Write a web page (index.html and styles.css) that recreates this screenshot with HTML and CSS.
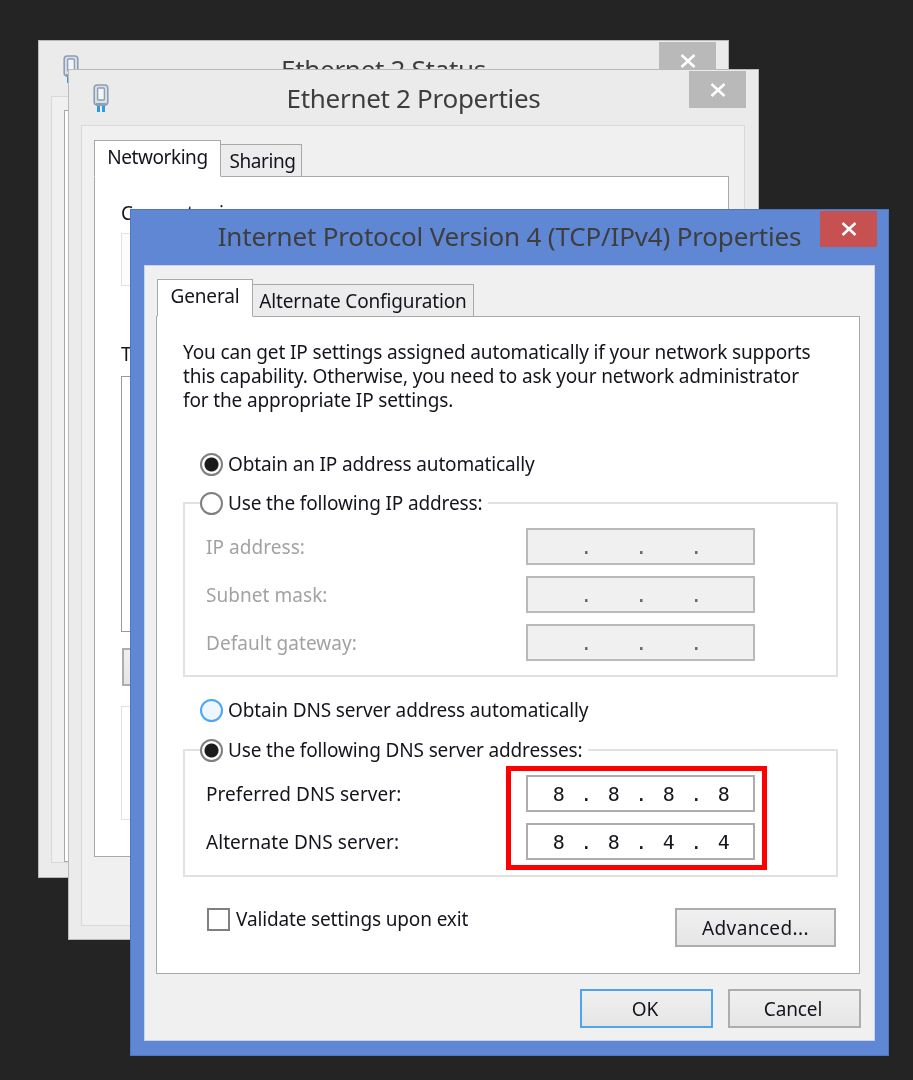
FILE: index.html
```html
<!DOCTYPE html>
<html lang="en">
<head>
<meta charset="utf-8">
<title>Internet Protocol Version 4 (TCP/IPv4) Properties</title>
<link rel="stylesheet" href="styles.css">
</head>
<body>
<svg class="defs" width="0" height="0" aria-hidden="true">
  <symbol id="plug" viewBox="0 0 16 28">
    <rect x="1.2" y="1" width="13.6" height="20" rx="3" fill="#d7dfe8" stroke="#8d9fb5" stroke-width="1.6"/>
    <rect x="4.6" y="4" width="6.8" height="12" rx="1" fill="#f3f5f7" stroke="#8d9fb5" stroke-width="1.4"/>
    <rect x="3" y="19" width="10" height="3" fill="#8d9fb5"/>
    <rect x="4" y="22" width="3" height="6" fill="#2f9bd8"/>
    <rect x="9" y="22" width="3" height="6" fill="#2f9bd8"/>
  </symbol>
  <symbol id="x" viewBox="0 0 16 16">
    <path d="M1.5 2 14.5 14M14.5 2 1.5 14" stroke="#fff" stroke-width="2.6" fill="none"/>
  </symbol>
</svg>

<section class="win win-status">
  <header class="bar">
    <svg class="bar-icon"><use href="#plug"/></svg>
    <h2 class="title title-back">Ethernet 2 Status</h2>
    <div class="close"><svg class="close-x"><use href="#x"/></svg></div>
  </header>
  <div class="panel panel-status"><div class="status-body"></div></div>
</section>

<section class="win win-props">
  <header class="bar">
    <svg class="bar-icon"><use href="#plug"/></svg>
    <h2 class="title title-back">Ethernet 2 Properties</h2>
    <div class="close"><svg class="close-x"><use href="#x"/></svg></div>
  </header>
  <div class="panel panel-props">
    <div class="tabs">
      <div class="tab tab-on tab-net">Networking</div>
      <div class="tab tab-share">Sharing</div>
    </div>
    <div class="props-body">
      <p class="connect-label">Connect using:</p>
      <div class="adapter-box"></div>
      <p class="items-label">This connection uses the following items:</p>
      <div class="list-box"></div>
      <div class="btn install-btn"></div>
      <div class="desc-box"></div>
    </div>
  </div>
</section>

<section class="win win-ipv4">
  <header class="bar bar-ipv4">
    <h1 class="title title-main">Internet Protocol Version 4 (TCP/IPv4) Properties</h1>
    <div class="close close-red"><svg class="close-x"><use href="#x"/></svg></div>
  </header>
  <div class="panel panel-ipv4">
    <div class="tabs tabs-ipv4">
      <div class="tab tab-on tab-general">General</div>
      <div class="tab tab-alt">Alternate Configuration</div>
    </div>
    <div class="ipv4-body">
      <p class="intro">You can get IP settings assigned automatically if your network supports<br>this capability. Otherwise, you need to ask your network administrator<br>for the appropriate IP settings.</p>

      <label class="opt opt-first"><span class="radio radio-on"></span>Obtain an IP address automatically</label>

      <fieldset class="group group-ip">
        <legend class="opt"><span class="radio"></span>Use the following IP address:</legend>
        <div class="row muted"><span>IP address:</span><div class="ip ip-off"><i></i><b>.</b><i></i><b>.</b><i></i><b>.</b><i></i></div></div>
        <div class="row muted"><span>Subnet mask:</span><div class="ip ip-off"><i></i><b>.</b><i></i><b>.</b><i></i><b>.</b><i></i></div></div>
        <div class="row muted"><span>Default gateway:</span><div class="ip ip-off"><i></i><b>.</b><i></i><b>.</b><i></i><b>.</b><i></i></div></div>
      </fieldset>

      <label class="opt opt-dns"><span class="radio radio-hover"></span>Obtain DNS server address automatically</label>

      <fieldset class="group group-dns">
        <legend class="opt"><span class="radio radio-on"></span>Use the following DNS server addresses:</legend>
        <div class="row"><span>Preferred DNS server:</span><div class="ip"><i>8</i><b>.</b><i>8</i><b>.</b><i>8</i><b>.</b><i>8</i></div></div>
        <div class="row"><span>Alternate DNS server:</span><div class="ip"><i>8</i><b>.</b><i>8</i><b>.</b><i>4</i><b>.</b><i>4</i></div></div>
        <div class="highlight"></div>
      </fieldset>

      <div class="validate">
        <label class="check-label"><span class="check"></span>Validate settings upon exit</label>
        <div class="btn btn-advanced">Advanced...</div>
      </div>
    </div>
    <div class="footer">
      <div class="btn btn-main btn-ok">OK</div>
      <div class="btn btn-main">Cancel</div>
    </div>
  </div>
</section>
</body>
</html>
```
FILE: styles.css
```css
* { box-sizing: border-box; }
html, body { margin: 0; height: 100%; }
body {
  position: relative;
  width: 913px;
  height: 1080px;
  overflow: hidden;
  background: #242424;
  font-family: "Noto Sans", "Liberation Sans", sans-serif;
  font-size: 19px;
  letter-spacing: -0.14px;
  line-height: 24px;
  color: #14141e;
}
.defs { position: absolute; }

.win {
  position: absolute;
  display: flex;
  flex-direction: column;
  background: #ebebeb;
  border: 1px solid #b9b9b9;
  filter: blur(0.4px);
}
.win-status { left: 38px; top: 40px; width: 691px; height: 838px; }
.win-props { left: 68px; top: 69px; width: 691px; height: 871px; }
.win-ipv4 { left: 130px; top: 209px; width: 759px; height: 847px; background: #5f87d3; border-color: #4f77bf; }

.bar { position: relative; height: 55px; flex: none; display: flex; justify-content: center; align-items: center; }
.title { margin: 0; font-weight: 400; font-size: 26px; line-height: 36px; color: #3e3e3e; }
.title-back { letter-spacing: -0.3px; }
.title-main { letter-spacing: -0.17px; padding-bottom: 3px; }
.bar-icon { position: absolute; left: 24px; top: 13px; width: 16px; height: 30px; }
.close {
  position: absolute; right: 12px; top: 1px;
  width: 57px; height: 37px;
  background: #b9b9b9;
  display: flex; align-items: center; justify-content: center;
}
.close-red { background: #c75050; height: 36px; top: 1px; right: 11px; }
.close-x { width: 16px; height: 16px; }

.panel { flex: 1; margin: 0 13px 14px 12px; background: #f0f0f0; border: 1px solid #d9d9d9; }
.panel-status { margin-top: 0; padding: 13px 0 0 12px; }
.status-body { height: 100%; background: #fff; border: 1px solid #a8a8a8; width: 640px; }
.panel-props { padding: 14px 15px 0 12px; height: 801px; flex: none; }
.panel-ipv4 { display: flex; flex-direction: column; margin-left: 13px; padding: 13px 14px 0 11px; border-color: #c9d3e6; }

.tabs { display: flex; align-items: flex-end; position: relative; z-index: 1; margin-bottom: -1px; }
.tabs-ipv4 { margin-left: 1px; }
.tab { background: #ececec; border: 1px solid #a9a9a9; border-left-width: 0; display: flex; align-items: center; justify-content: center; white-space: nowrap; }
.tab-on { background: #fff; border-left-width: 1px; border-bottom-color: #fff; }
.tab-net { width: 127px; height: 37px; padding-bottom: 3px; letter-spacing: -0.45px; }
.tab-share { width: 81px; height: 33px; padding-left: 3px; letter-spacing: -0.4px; }
.tab-general { width: 96px; height: 38px; padding-bottom: 4px; }
.tab-alt { width: 221px; height: 33px; }

.props-body { height: 681px; background: #fff; border: 1px solid #a9a9a9; padding: 24px 26px 0 26px; }
.connect-label, .items-label { margin: 0; }
.adapter-box { height: 53px; margin-top: 8px; background: #fcfcfc; border: 1px solid #e2e2e2; }
.items-label { margin-top: 56px; }
.list-box { height: 256px; margin-top: 10px; border: 1px solid #9a9a9a; }
.install-btn { width: 140px; height: 38px; margin: 16px 0 0 1px; }
.desc-box { height: 114px; margin-top: 20px; border: 1px solid #e2e2e2; }

.ipv4-body {
  height: 658px;
  background: #fff;
  border: 1px solid #a9a9a9;
  padding: 23px 21px 0 26px;
}
.intro { margin: 0; white-space: nowrap; }
.opt { display: flex; align-items: center; height: 24px; white-space: nowrap; }
.opt-first { margin: 40px 0 15px 17px; }
.opt-dns { margin: 21px 0 16px 17px; }
.radio {
  flex: none; width: 23px; height: 23px; margin-right: 5px;
  border-radius: 50%;
  border: 2px solid #7f7f7f;
  background: #fff;
}
.radio-on { background: radial-gradient(circle, #1b1b1b 0 6.5px, #fff 7.5px); }
.radio-hover { border-color: #4ea6f2; background: #eef6fe; }

.group { margin: 0; min-width: 0; padding: 0 0 0 21px; border: 2px solid #e1e1e1; }
.group legend { padding: 0 6px 0 0; margin-left: -6px; }
.group-ip { height: 186px; padding-top: 13px; }
.group-dns { position: relative; height: 139px; padding-top: 13px; }

.row { display: flex; align-items: center; justify-content: space-between; height: 37px; margin-bottom: 11px; padding-right: 81px; letter-spacing: 0.05px; }
.muted { color: #a2a2a2; }
.ip {
  width: 229px; height: 37px;
  padding-left: 17px;
  display: grid;
  grid-template-columns: repeat(7, 27.5px);
  align-items: center;
  justify-items: center;
  border: 2px solid #adadad;
  background: #fff;
  font-family: "DejaVu Sans Mono", monospace;
  font-size: 20px;
  color: #16161c;
}
.ip i, .ip b { font-style: normal; font-weight: 400; }
.ip-off { background: #f0f0f0; border-color: #b9b9b9; color: #666; }

.highlight {
  position: absolute;
  left: 321px; top: 4px;
  width: 261px; height: 104px;
  border: 5px solid #f00;
}

.validate { display: flex; justify-content: space-between; align-items: flex-start; margin-top: 29px; padding-right: 2px; }
.check-label { display: flex; align-items: center; height: 24px; margin-left: 24px; margin-top: 1px; }
.check { width: 23px; height: 23px; margin-right: 6px; border: 2px solid #7f7f7f; background: #fff; }

.btn {
  background: linear-gradient(#f0f0f0, #e5e5e5);
  border: 2px solid #adadad;
  display: flex; align-items: center; justify-content: center;
}
.btn-advanced { width: 161px; height: 39px; margin-top: 2px; letter-spacing: 0.4px; }
.footer { display: flex; justify-content: flex-end; gap: 15px; margin-top: 15px; margin-right: -1px; }
.btn-main { width: 133px; height: 39px; padding-right: 3px; }
.btn-ok { border-color: #4fa4ea; }
```
